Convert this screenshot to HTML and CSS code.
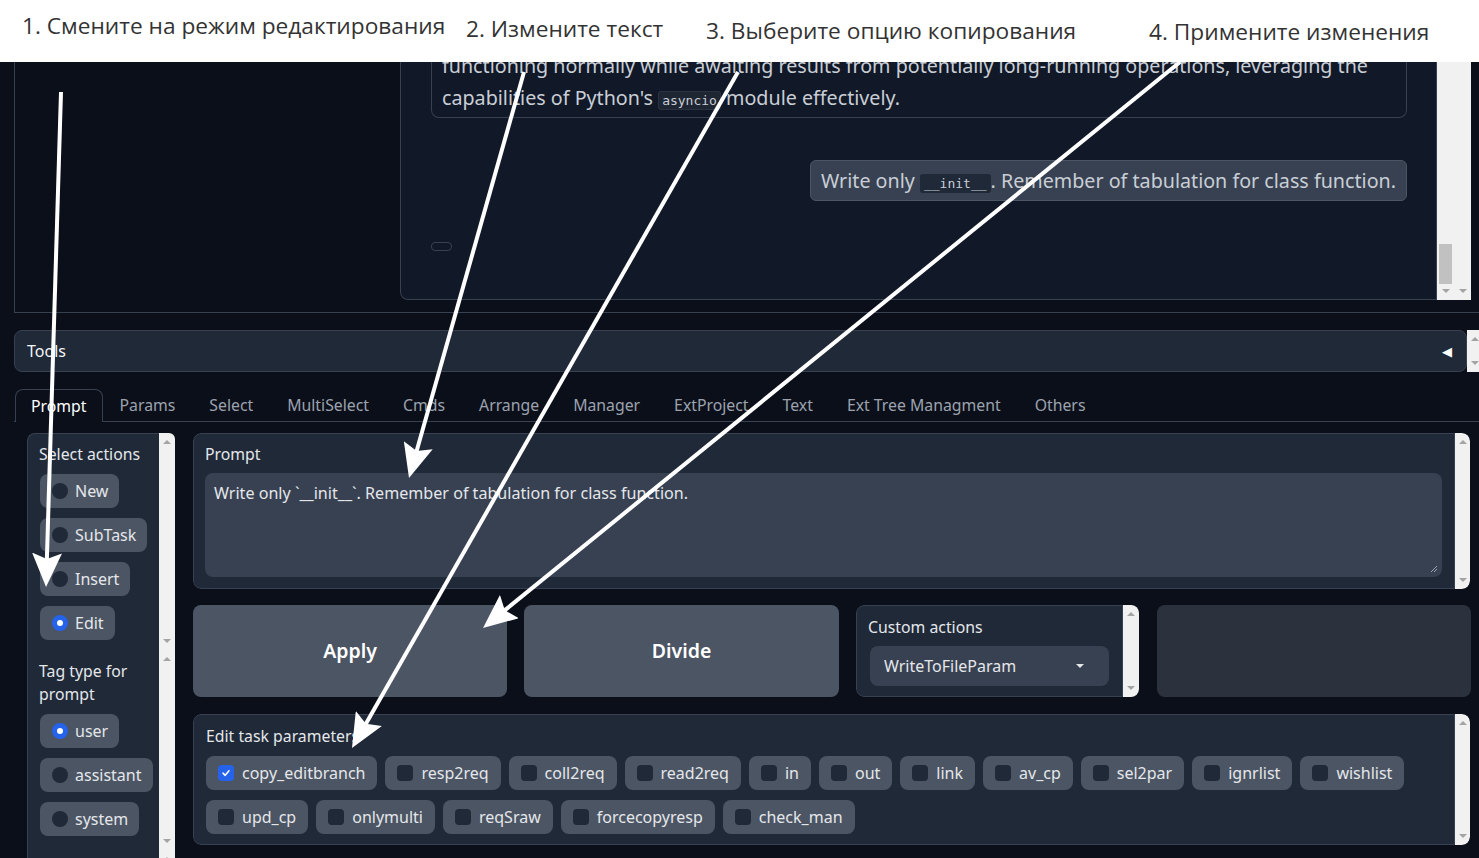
FILE: index.html
```html
<!DOCTYPE html>
<html lang="ru">
<head>
<meta charset="utf-8">
<title>Edit mode</title>
<link rel="stylesheet" href="styles.css">
</head>
<body>
<header class="steps">
  <span class="step s1">1. Смените на режим редактирования</span>
  <span class="step s2">2. Измените текст</span>
  <span class="step s3">3. Выберите опцию копирования</span>
  <span class="step s4">4. Примените изменения</span>
</header>

<main class="app">
  <div class="chat-clip">
    <div class="chat-row">
      <div class="chat-side"></div>
      <div class="chatbot">
        <div class="msg bot">functioning normally while awaiting results from potentially long-running operations, leveraging the<br>capabilities of Python's <code>asyncio</code> module effectively.</div>
        <div class="msg user">Write only <code>__init__</code>. Remember of tabulation for class function.</div>
        <div class="copy-btn"></div>
      </div>
      <div class="sbar sbar-end"><span class="thumb"></span><span class="dn"></span></div>
      <div class="sbar sbar-end"><span class="dn"></span></div>
    </div>
  </div>

  <div class="tools-row">
    <div class="tools-bar"><span>Tools</span><span class="collapse">◀</span></div>
    <div class="sbar"><span class="up"></span><span class="dn"></span></div>
  </div>

  <nav class="tabs">
    <span class="tab active">Prompt</span>
    <span class="tab">Params</span>
    <span class="tab">Select</span>
    <span class="tab">MultiSelect</span>
    <span class="tab">Cmds</span>
    <span class="tab">Arrange</span>
    <span class="tab">Manager</span>
    <span class="tab">ExtProject</span>
    <span class="tab">Text</span>
    <span class="tab">Ext Tree Managment</span>
    <span class="tab">Others</span>
  </nav>

  <section class="tab-panel">
    <aside class="side">
      <div class="side-sec sec1">
        <div class="side-body">
          <div class="label">Select actions</div>
          <div class="radios">
            <span class="radio"><span class="dot"></span>New</span>
            <span class="radio"><span class="dot"></span>SubTask</span>
            <span class="radio"><span class="dot"></span>Insert</span>
            <span class="radio"><span class="dot on"></span>Edit</span>
          </div>
        </div>
        <div class="sbar"><span class="up"></span><span class="dn"></span></div>
      </div>
      <div class="side-sec sec2">
        <div class="side-body">
          <div class="label wrap">Tag type for prompt</div>
          <div class="radios">
            <span class="radio"><span class="dot on"></span>user</span>
            <span class="radio"><span class="dot"></span>assistant</span>
            <span class="radio"><span class="dot"></span>system</span>
          </div>
        </div>
        <div class="sbar"><span class="up"></span><span class="dn"></span></div>
      </div>
      <div class="side-sec sec3">
        <div class="side-body"></div>
        <div class="sbar"><span class="up"></span></div>
      </div>
    </aside>

    <div class="main-col">
      <div class="block prompt-block">
        <div class="block-body">
          <div class="label">Prompt</div>
          <div class="textarea">Write only `__init__`. Remember of tabulation for class function.
            <svg class="grip" width="8" height="8" viewBox="0 0 8 8"><path d="M7 1L1 7M7 4L4 7" stroke="#9ca3af" stroke-width="1"/></svg>
          </div>
        </div>
        <div class="sbar"><span class="up"></span><span class="dn"></span></div>
      </div>

      <div class="btn-row">
        <div class="btn">Apply</div>
        <div class="btn">Divide</div>
        <div class="block custom-block">
          <div class="block-body">
            <div class="label">Custom actions</div>
            <div class="dropdown"><span>WriteToFileParam</span><span class="caret"></span></div>
          </div>
          <div class="sbar"><span class="up"></span><span class="dn"></span></div>
        </div>
        <div class="empty"></div>
      </div>

      <div class="block params-block">
        <div class="block-body">
          <div class="label">Edit task parameters</div>
          <div class="checks">
            <span class="check"><span class="box on"><svg width="10" height="10" viewBox="0 0 10 10"><path d="M2 5.2L4.2 7.3L8 2.8" fill="none" stroke="#fff" stroke-width="1.6" stroke-linecap="round" stroke-linejoin="round"/></svg></span>copy_editbranch</span>
            <span class="check"><span class="box"></span>resp2req</span>
            <span class="check"><span class="box"></span>coll2req</span>
            <span class="check"><span class="box"></span>read2req</span>
            <span class="check"><span class="box"></span>in</span>
            <span class="check"><span class="box"></span>out</span>
            <span class="check"><span class="box"></span>link</span>
            <span class="check"><span class="box"></span>av_cp</span>
            <span class="check"><span class="box"></span>sel2par</span>
            <span class="check"><span class="box"></span>ignrlist</span>
            <span class="check"><span class="box"></span>wishlist</span>
            <span class="check"><span class="box"></span>upd_cp</span>
            <span class="check"><span class="box"></span>onlymulti</span>
            <span class="check"><span class="box"></span>reqSraw</span>
            <span class="check"><span class="box"></span>forcecopyresp</span>
            <span class="check"><span class="box"></span>check_man</span>
          </div>
        </div>
        <div class="sbar"><span class="up"></span><span class="dn"></span></div>
      </div>
    </div>
  </section>
</main>

<svg class="arrows" width="1479" height="858" viewBox="0 0 1479 858">
  <defs>
    <marker id="head" markerUnits="userSpaceOnUse" markerWidth="34" markerHeight="30" viewBox="0 0 34 30" refX="12" refY="15" orient="auto">
      <path d="M0 0L34 15L0 30L6 15Z" fill="#fff"/>
    </marker>
  </defs>
  <line x1="61" y1="92" x2="46.7" y2="565" stroke="#fff" stroke-width="4" marker-end="url(#head)"/>
  <line x1="524" y1="72" x2="415" y2="456.8" stroke="#fff" stroke-width="4" marker-end="url(#head)"/>
  <line x1="738" y1="72" x2="362.9" y2="728.9" stroke="#fff" stroke-width="4" marker-end="url(#head)"/>
  <line x1="1180" y1="62" x2="500.1" y2="614.1" stroke="#fff" stroke-width="4" marker-end="url(#head)"/>
</svg>
</body>
</html>
```

FILE: styles.css
```css
* { box-sizing: border-box; }
html, body { margin: 0; padding: 0; }
body {
  position: relative;
  width: 1479px;
  height: 858px;
  overflow: hidden;
  background: #0b0f19;
  font-family: "Noto Sans", "Open Sans", sans-serif;
  color: #e5e7eb;
}

/* annotation header */
.steps {
  height: 62px;
  background: #fff;
  display: flex;
  align-items: flex-start;
  padding-left: 22px;
  font-family: "Open Sans", "Noto Sans", sans-serif;
  font-size: 22.7px;
  line-height: 30px;
  color: #333;
  white-space: nowrap;
}
.step { display: block; }
.s1 { width: 444px; padding-top: 11px; }
.s2 { width: 240px; padding-top: 14px; }
.s3 { width: 443px; padding-top: 16px; }
.s4 { padding-top: 17px; }

.app { width: 1483px; }

/* generic scrollbar */
.sbar {
  width: 16px;
  flex: none;
  background: #f1f1f1;
  display: flex;
  flex-direction: column;
  justify-content: space-between;
  align-items: center;
  padding: 7px 0;
}
.sbar-end { justify-content: flex-end; width: 17px; }
.up, .dn { width: 0; height: 0; border-left: 4px solid transparent; border-right: 4px solid transparent; }
.up { border-bottom: 4px solid #a3a3a3; }
.dn { border-top: 4px solid #a3a3a3; }
.thumb { width: 13px; height: 40px; background: #c1c1c1; margin-bottom: 5px; }

/* chat */
.chat-clip {
  height: 251px;
  overflow: hidden;
  display: flex;
  flex-direction: column;
  justify-content: flex-end;
}
.chat-row {
  margin-left: 14px;
  display: flex;
  border-left: 1px solid #374151;
  border-bottom: 1px solid #374151;
  padding-bottom: 12px;
}
.chat-side { width: 385px; flex: none; }
.chatbot {
  width: 1037px;
  flex: none;
  background: #111827;
  border: 1px solid #374151;
  border-top: none;
  border-radius: 0 0 0 8px;
  padding: 0 29px 48px 30px;
  display: flex;
  flex-direction: column;
}
.msg {
  font-family: "Noto Sans", sans-serif;
  font-size: 19.7px;
  color: #c9ced6;
  white-space: nowrap;
}
.msg code {
  font-family: "DejaVu Sans Mono", monospace;
  font-size: 13px;
  line-height: 1;
  background: #1f2633;
  border: 1px solid #2b3340;
  border-radius: 3px;
  padding: 1px 3px;
}
.bot {
  border: 1px solid #374151;
  border-top: none;
  border-radius: 0 0 8px 8px;
  padding: 0 10px 3px;
  line-height: 32px;
}
.user {
  align-self: flex-end;
  margin-top: 42px;
  height: 41px;
  background: #374151;
  border: 1px solid #4b5563;
  border-radius: 6px;
  padding: 0 10px;
  line-height: 39px;
}
.user code { background: #1f2937; border-color: #1f2937; }
.copy-btn {
  margin-top: 41px;
  width: 21px;
  height: 9px;
  border: 1px solid #374151;
  border-radius: 4px;
}

/* tools */
.tools-row { display: flex; margin: 17px 0 0 14px; height: 42px; }
.tools-bar {
  flex: 1;
  background: #1f2937;
  border: 1px solid #374151;
  border-radius: 8px;
  display: flex;
  align-items: center;
  justify-content: space-between;
  padding: 0 14px 0 12px;
  font-size: 16px;
  color: #f3f4f6;
}
.collapse { font-size: 13px; color: #fff; }

/* tabs */
.tabs {
  margin: 17px 0 0 14px;
  display: flex;
  border-bottom: 1px solid #374151;
  height: 33px;
}
.tab {
  padding: 0 17px;
  line-height: 33px;
  font-size: 15.8px;
  color: #9ca3af;
  white-space: nowrap;
}
.tab.active {
  margin-left: 1px;
  padding: 0 15px;
  border: 1px solid #374151;
  border-bottom: none;
  border-radius: 8px 8px 0 0;
  background: #0b0f19;
  color: #fff;
  height: 33px;
  line-height: 32px;
}

.tab-panel {
  margin-left: 14px;
  padding: 11px 12px 0 13px;
  display: flex;
  gap: 18px;
  align-items: flex-start;
}

/* side */
.side {
  width: 148px;
  flex: none;
  display: flex;
  flex-direction: column;
}
.side-sec { display: flex; }
.side-body {
  flex: 1;
  background: #1f2937;
  border-left: 1px solid #374151;
  padding: 10px 0 0 11px;
}
.sec1 .side-body { border-top: 1px solid #374151; border-top-left-radius: 8px; }
.sec1 .sbar { border-top-right-radius: 6px; }
.sec1 { height: 217px; }
.sec2 { height: 200px; }
.sec3 { height: 30px; }
.label { font-size: 15.8px; line-height: 20px; color: #e5e7eb; white-space: nowrap; }
.label.wrap { white-space: normal; line-height: 23px; padding-right: 8px; }
.radios { display: flex; flex-direction: column; align-items: flex-start; gap: 10px; margin-top: 10px; padding-left: 1px; }
.sec2 .radios { margin-top: 8px; }
.radio {
  display: inline-flex;
  align-items: center;
  gap: 7px;
  height: 34px;
  padding: 0 11px 0 12px;
  background: #4b5563;
  border-radius: 8px;
  font-size: 16px;
  color: #e5e7eb;
}
.dot { width: 16px; height: 16px; border-radius: 50%; background: #1f2937; position: relative; }
.dot.on { background: #2563eb; }
.dot.on::after {
  content: "";
  position: absolute;
  left: 5px; top: 5px;
  width: 6px; height: 6px;
  border-radius: 50%;
  background: #fff;
}

/* main column */
.main-col { flex: 1; display: flex; flex-direction: column; }
.block { display: flex; border-radius: 8px; overflow: hidden; margin-right: 1px; }
.block-body {
  flex: 1;
  background: #1f2937;
  border: 1px solid #374151;
  border-radius: 8px 0 0 8px;
  padding: 10px 12px 11px 11px;
}
.block .sbar { border-radius: 0 8px 8px 0; width: 15px; }
.prompt-block { height: 156px; }
.textarea {
  position: relative;
  margin-top: 9px;
  height: 104px;
  background: #374151;
  border-radius: 8px;
  padding: 10px 9px;
  font-size: 16.1px;
  line-height: 21px;
  color: #e5e7eb;
}
.grip { position: absolute; right: 4px; bottom: 4px; }

.btn-row {
  margin-top: 16px;
  height: 92px;
  display: grid;
  grid-template-columns: 314px 315px 283px 1fr;
  gap: 17px;
}
.btn {
  background: #4b5563;
  border-radius: 8px;
  display: flex;
  align-items: center;
  justify-content: center;
  font-size: 19.5px;
  font-weight: 600;
  color: #fff;
  padding-bottom: 1px;
}
.custom-block { margin-right: 0; }
.custom-block .block-body { padding: 11px 13px 11px 11px; }
.custom-block .sbar { width: 16px; border-radius: 0 6px 6px 0; }
.dropdown {
  margin-top: 9px;
  height: 40px;
  background: #374151;
  border-radius: 8px;
  display: flex;
  align-items: center;
  justify-content: space-between;
  padding: 0 25px 0 14px;
  font-size: 16px;
  color: #e5e7eb;
}
.custom-block .dropdown { margin-left: 2px; }
.caret { width: 0; height: 0; border-left: 4px solid transparent; border-right: 4px solid transparent; border-top: 4px solid #e5e7eb; }
.empty { background: #2c323d; border-radius: 8px; margin-left: 1px; }

.params-block { margin-top: 17px; height: 131px; }
.params-block .block-body { padding: 11px 12px; }
.checks { display: flex; flex-wrap: wrap; gap: 10px 8px; margin-top: 10px; }
.check {
  display: inline-flex;
  align-items: center;
  gap: 8px;
  height: 34px;
  padding: 0 12px;
  background: #4b5563;
  border-radius: 8px;
  font-size: 16px;
  color: #e5e7eb;
}
.box { width: 16px; height: 16px; border-radius: 4px; background: #1f2937; display: flex; align-items: center; justify-content: center; }
.box.on { background: #2563eb; }

/* annotation arrows */
.arrows { position: absolute; left: 0; top: 0; pointer-events: none; }
```
